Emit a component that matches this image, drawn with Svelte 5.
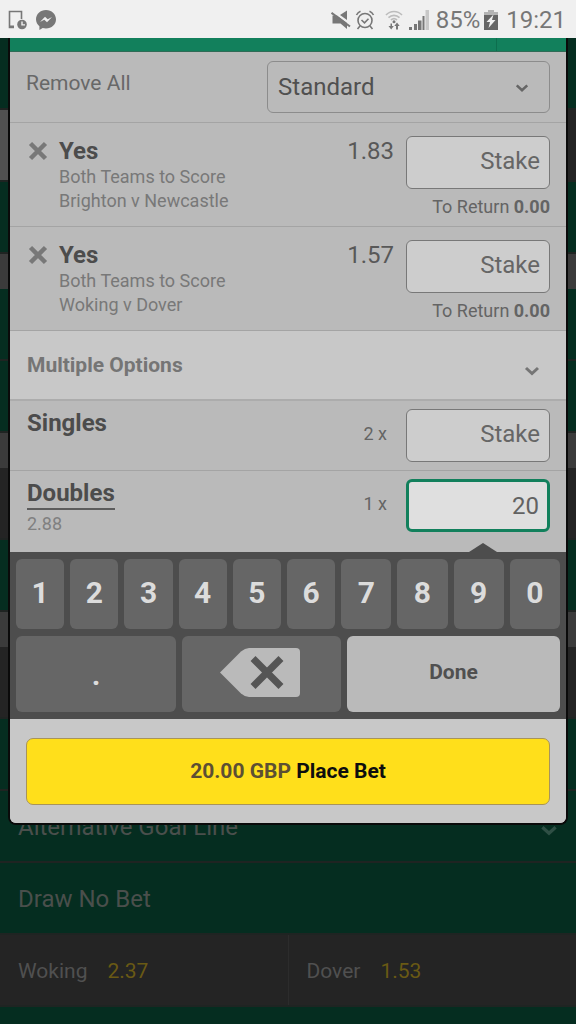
<script lang="ts">
  type Selection = { id: string; name: string; market: string; fixture: string; odds: string };

  const selections: Selection[] = [
    { id: "btts-1", name: "Yes", market: "Both Teams to Score", fixture: "Brighton v Newcastle", odds: "1.83" },
    { id: "btts-2", name: "Yes", market: "Both Teams to Score", fixture: "Woking v Dover", odds: "1.57" },
  ];

  const digits = ["1", "2", "3", "4", "5", "6", "7", "8", "9", "0"];

  let doublesStake = $state("20");
  let total = $derived((Number(doublesStake) || 0).toFixed(2));

  function press(key: string) {
    doublesStake += key;
  }

  function erase() {
    doublesStake = doublesStake.slice(0, -1);
  }
</script>

{#snippet chevron()}
  <svg class="chevron" viewBox="0 0 16 10" aria-hidden="true">
    <path d="M2 2l6 5.500L14 2" fill="none" stroke="currentColor" stroke-width="3" />
  </svg>
{/snippet}

<div class="page">
  <header class="status">
    <svg class="i-device" viewBox="0 0 20 20" aria-hidden="true">
      <path d="M6 17.500H1.500V1.500h12V9" fill="none" stroke="#777" stroke-width="1.600" />
      <path d="M1 15.500h5v2.500H1z" fill="#777" />
      <circle cx="14" cy="14.500" r="4.800" fill="#777" />
      <path d="M14 11.500v3.400h3" fill="none" stroke="#f0f0f0" stroke-width="1.400" />
    </svg>
    <svg class="i-chat" viewBox="0 0 20 20" aria-hidden="true">
      <path d="M10 0C4.400 0 0 4.100 0 9.300c0 2.900 1.300 5.300 3.400 7V20l3.300-1.900c1 .3 2.100.5 3.300.5 5.600 0 10-4.100 10-9.300S15.600 0 10 0z" fill="#777" />
      <path d="M4 12l5-5.200 2.700 2.500L16 7l-5 5.200-2.700-2.500z" fill="#f0f0f0" />
    </svg>
    <span class="spacer"></span>
    <svg class="i-mute" viewBox="0 0 20 20" aria-hidden="true">
      <path d="M1.500 5.500H6L16 13v6l-6.500-5.500h-8z" fill="#777" />
      <path d="M9 5L16 .5V10z" fill="#777" />
      <path d="M.5 2.800L19 16.500" stroke="#777" stroke-width="2" />
    </svg>
    <svg class="i-alarm" viewBox="0 0 20 20" aria-hidden="true">
      <g fill="none" stroke="#777" stroke-width="1.600">
        <circle cx="10" cy="10.500" r="7" />
        <path d="M1.500 5A8 8 0 0 1 5.500 1.300M14.500 1.300A8 8 0 0 1 18.500 5M5 16l-2.500 3M15 16l2.500 3M6.500 10l3 2.800 4-4" />
      </g>
    </svg>
    <svg class="i-wifi" viewBox="0 0 18 20" aria-hidden="true">
      <g fill="none" stroke="#bcbcbc" stroke-width="1.700">
        <path d="M1 5c4.500-4.700 11.500-4.700 16 0" />
        <path d="M3.500 7.700c3.200-3.100 7.800-3.100 11 0" />
        <path d="M6 10c2-1.700 4-1.700 6 0" />
      </g>
      <circle cx="9" cy="11.800" r="1.500" fill="#777" />
      <path d="M5.500 13.500v2.500H3.500L6.200 19.500 8.800 16H7v-2.500zM11 19.500V16H9.300l2.700-3.500 2.700 3.500H13v3.500z" fill="#777" />
    </svg>
    <svg class="i-signal" viewBox="0 0 20 20" aria-hidden="true">
      <path d="M0 17h3v3H0zM5 14h3v6H5zM9 10.500h3.500V20H9zM13.500 6h2v14h-2z" fill="#777" />
      <path d="M16.500 0H20v20h-3.500z" fill="#c8c8c8" />
    </svg>
    <span class="percent">85%</span>
    <svg class="i-battery" viewBox="0 0 14 20" aria-hidden="true">
      <path d="M4 0h6v2h4v4H0V2h4z" fill="#b4b4b4" />
      <path d="M0 5h14v15H0z" fill="#666" />
      <path d="M9.500 4.500L2.500 12H6l-1.500 6L11.500 10H8z" fill="#f0f0f0" />
    </svg>
    <span class="clock">19:21</span>
  </header>

  <main class="markets">
    <div class="band"></div>
    <div class="band tabs"></div>
    <div class="band"></div>
    <div class="heading"></div>
    <div class="band"></div>
    <div class="band"></div>
    <div class="heading"></div>
    <div class="band prices"></div>
    <div class="band"></div>
    <div class="heading"></div>
    <div class="band prices"></div>
    <div class="band"></div>
    <div class="band"><span>Alternative Goal Line</span>{@render chevron()}</div>
    <div class="band"><span>Draw No Bet</span></div>
    <div class="band prices">
      <div class="price"><span>Woking</span><b>2.37</b></div>
      <div class="price"><span>Dover</span><b>1.53</b></div>
    </div>
    <div class="rest"></div>
  </main>

  <section class="slip" aria-label="Bet slip">
    <div class="slip-top"><span></span></div>

    <div class="tools">
      <button class="plain">Remove All</button>
      <div class="select">
        <select aria-label="Bet type">
          <option>Standard</option>
        </select>
        {@render chevron()}
      </div>
    </div>

    {#each selections as bet (bet.id)}
      <article class="bet">
        <button class="remove" aria-label="Remove {bet.fixture}">
          <svg viewBox="0 0 20 20" aria-hidden="true">
            <path d="M2.500 2.500l15 15M17.500 2.500l-15 15" stroke="currentColor" stroke-width="4.500" />
          </svg>
        </button>
        <div class="info">
          <h2>{bet.name}</h2>
          <p>{bet.market}</p>
          <p>{bet.fixture}</p>
        </div>
        <span class="odds">{bet.odds}</span>
        <div class="stake">
          <input placeholder="Stake" aria-label="Stake for {bet.fixture}" />
          <p>To Return <b>0.00</b></p>
        </div>
      </article>
    {/each}

    <button class="options">
      <span>Multiple Options</span>
      {@render chevron()}
    </button>

    <div class="multi">
      <div class="label"><label for="singles">Singles</label></div>
      <span class="count">2 x</span>
      <input id="singles" placeholder="Stake" />
    </div>

    <div class="multi doubles">
      <div class="label">
        <label class="linked" for="doubles">Doubles</label>
        <small>2.88</small>
      </div>
      <span class="count">1 x</span>
      <div class="active">
        <input id="doubles" bind:value={doublesStake} />
      </div>
    </div>

    <div class="keypad">
      <div class="digits">
        {#each digits as digit}
          <button onclick={() => press(digit)}>{digit}</button>
        {/each}
      </div>
      <div class="actions">
        <button onclick={() => press(".")}>.</button>
        <button class="delete" aria-label="Delete" onclick={erase}>
          <svg class="erase" viewBox="0 0 80 50" aria-hidden="true">
            <path d="M0 24.500L21 3.500Q25 0 29 0H76Q80 0 80 4V45Q80 49 76 49H29Q25 49 21 45.500z" fill="#bababa" />
            <path d="M35.500 13l23 23M58.500 13l-23 23" stroke="#555" stroke-width="7" stroke-linecap="square" />
          </svg>
        </button>
        <button class="done">Done</button>
      </div>
    </div>

    <footer>
      <button class="place"><span>{total} GBP</span> Place Bet</button>
    </footer>
  </section>
</div>

<style>
  :global(body) {
    margin: 0;
    background: #052d20;
  }

  * {
    box-sizing: border-box;
  }

  .page {
    position: relative;
    display: flex;
    flex-direction: column;
    min-height: 100vh;
    font-family: Roboto, "Liberation Sans", sans-serif;
    color: #505050;
  }

  button,
  input,
  select {
    font: inherit;
    color: inherit;
    margin: 0;
  }

  button {
    padding: 0;
    border: 0;
    background: none;
    cursor: pointer;
  }

  h2,
  p {
    margin: 0;
  }

  /* status bar */
  .status {
    display: flex;
    align-items: center;
    height: 38px;
    padding: 2px 10px 0 8px;
    background: #f0f0f0;
    color: #777;
    font-size: 24px;
  }

  .status svg {
    height: 20px;
  }

  .spacer {
    flex: 1;
  }

  .i-device {
    width: 20px;
    margin-right: 8px;
  }

  .i-chat {
    width: 20px;
  }

  .i-mute {
    width: 20px;
    margin-right: 4px;
  }

  .i-alarm {
    width: 20px;
    margin-right: 10px;
  }

  .i-wifi {
    width: 18px;
    margin-right: 6px;
  }

  .i-signal {
    width: 20px;
    margin-right: 7px;
  }

  .i-battery {
    width: 14px;
    margin: 0 8px 0 4px;
  }

  /* markets behind the slip */
  .markets {
    flex: 1;
    display: flex;
    flex-direction: column;
    font-size: 24px;
    color: #4a4f4c;
  }

  .band {
    display: flex;
    align-items: center;
    justify-content: space-between;
    height: 72px;
    padding: 2px 18px 0;
    border-bottom: 2px solid #1f2422;
    background: #052d20;
  }

  .band .chevron {
    width: 18px;
    height: 11px;
    margin-top: 6px;
    color: #2f4f45;
  }

  .tabs {
    background: linear-gradient(90deg, #515151 50%, #242424 50%);
  }

  .heading {
    height: 35px;
    background: #3b3b3b;
  }

  .prices {
    padding: 0;
    background: #242424;
    font-size: 21px;
  }

  .price {
    flex: 1;
    display: flex;
    align-items: center;
    gap: 20px;
    height: 100%;
    padding: 2px 0 0 18px;
    color: #505050;
  }

  .price + .price {
    border-left: 1px solid #2c2c2c;
  }

  .price b {
    font-weight: 400;
    color: #695914;
  }

  .rest {
    flex: 1;
    background: #052d20;
  }

  /* bet slip */
  .slip {
    position: absolute;
    top: 38px;
    left: 8px;
    right: 8px;
    overflow: hidden;
    border: solid #0a0a0a;
    border-width: 0 2px 2px;
    border-radius: 0 0 8px 8px;
    background: #bababa;
  }

  .slip-top {
    display: flex;
    justify-content: flex-end;
    height: 14px;
    border-bottom: 1px solid #2f6b56;
    background: #12805c;
  }

  .slip-top span {
    width: 70px;
    border-left: 1px solid #0d6e4e;
  }

  .chevron {
    width: 16px;
    height: 10px;
  }

  .tools {
    display: flex;
    justify-content: space-between;
    height: 71px;
    padding: 9px 16px 0;
    border-bottom: 1px solid #a4a4a4;
  }

  .plain {
    height: 44px;
    font-size: 21px;
    color: #686868;
  }

  .select {
    display: grid;
    align-items: center;
    width: 54%;
    height: 52px;
  }

  .select > :global(*) {
    grid-area: 1 / 1;
  }

  .select select {
    width: 100%;
    height: 52px;
    padding: 0 10px;
    appearance: none;
    border: 1px solid #8c8c8c;
    border-radius: 6px;
    background: none;
    font-size: 24px;
  }

  .select .chevron {
    justify-self: end;
    width: 14px;
    margin: 2px 21px 0 0;
    color: #666;
    pointer-events: none;
  }

  input {
    display: block;
    width: 144px;
    height: 53px;
    padding: 0 9px 4px;
    border: 1px solid #787878;
    border-radius: 6px;
    outline: 0;
    background: #cdcdcd;
    color: #626262;
    font-size: 24px;
    text-align: right;
  }

  input::placeholder {
    color: #666;
    opacity: 1;
  }

  .bet {
    display: flex;
    align-items: flex-start;
    height: 104px;
    padding: 13px 16px 0 18px;
    border-bottom: 1px solid #a4a4a4;
  }

  .remove {
    width: 31px;
    padding-top: 5px;
    text-align: left;
    color: #787878;
  }

  .remove svg {
    display: block;
    width: 20px;
    height: 20px;
  }

  .info {
    flex: 1;
    padding-top: 1px;
    font-size: 18px;
    line-height: 24px;
    color: #787878;
  }

  h2,
  .label label {
    font-size: 24px;
    font-weight: 700;
    line-height: 28px;
    color: #4c4c4c;
  }

  .odds {
    padding-top: 1px;
    margin-right: 12px;
    font-size: 24px;
    line-height: 28px;
    color: #585858;
  }

  .stake p {
    margin-top: 6px;
    font-size: 18px;
    line-height: 24px;
    text-align: right;
    color: #646464;
  }

  .options {
    display: flex;
    align-items: center;
    justify-content: space-between;
    width: 100%;
    height: 70px;
    padding: 0 26px 0 17px;
    border-bottom: 2px solid #acacac;
    background: #c8c8c8;
    color: #757575;
    font-size: 21px;
    font-weight: 700;
  }

  .options .chevron {
    margin-top: 12px;
  }

  .multi {
    display: flex;
    align-items: flex-start;
    height: 70px;
    padding: 8px 16px 0 17px;
    border-bottom: 1px solid #a4a4a4;
  }

  .label {
    flex: 1;
    display: flex;
    flex-direction: column;
    align-items: flex-start;
  }

  .label .linked {
    padding-bottom: 1px;
    border-bottom: 2px solid #5c5c5c;
  }

  small {
    font-size: 18px;
    line-height: 28px;
    color: #808080;
  }

  .count {
    margin-right: 19px;
    font-size: 18px;
    line-height: 50px;
    color: #646464;
  }

  .doubles {
    height: 81px;
    border-bottom: 0;
  }

  .active {
    position: relative;
  }

  .active input {
    padding: 0 8px;
    border: 3px solid #12805c;
    background: #dfdfdf;
  }

  /* pointer joining the keypad to the field in focus */
  .active::after {
    content: "";
    position: absolute;
    top: 64px;
    left: 63px;
    border: solid transparent;
    border-width: 0 14px 9px;
    border-bottom-color: #4d4d4d;
  }

  .keypad {
    display: flex;
    flex-direction: column;
    gap: 7px;
    padding: 7px 6px;
    background: #4d4d4d;
  }

  .digits,
  .actions {
    display: grid;
    gap: 6px;
  }

  .digits {
    grid-template-columns: repeat(6, 48fr) repeat(4, 50fr);
    grid-auto-rows: 70px;
  }

  .actions {
    grid-template-columns: 160fr 159fr 213fr;
    grid-auto-rows: 76px;
  }

  .keypad button {
    display: flex;
    align-items: center;
    justify-content: center;
    border-radius: 6px;
    background: #666;
    color: #dcdcdc;
    font-size: 30px;
    font-weight: 700;
  }

  .digits button {
    padding-bottom: 3px;
  }

  .erase {
    width: 80px;
    height: 50px;
  }

  .keypad .delete {
    padding: 0 4px 3px 0;
  }

  .keypad .done {
    padding-bottom: 4px;
    background: #bababa;
    color: #505050;
    font-size: 21px;
  }

  footer {
    padding: 19px 16px 18px;
    background: #c8c8c8;
  }

  .place {
    width: 100%;
    height: 67px;
    padding-bottom: 2px;
    border: 1px solid #a8945a;
    border-radius: 7px;
    background: #ffdf1b;
    color: #0e0e0e;
    font-size: 21px;
    font-weight: 700;
  }

  .place span {
    color: #5c4f33;
  }
</style>
